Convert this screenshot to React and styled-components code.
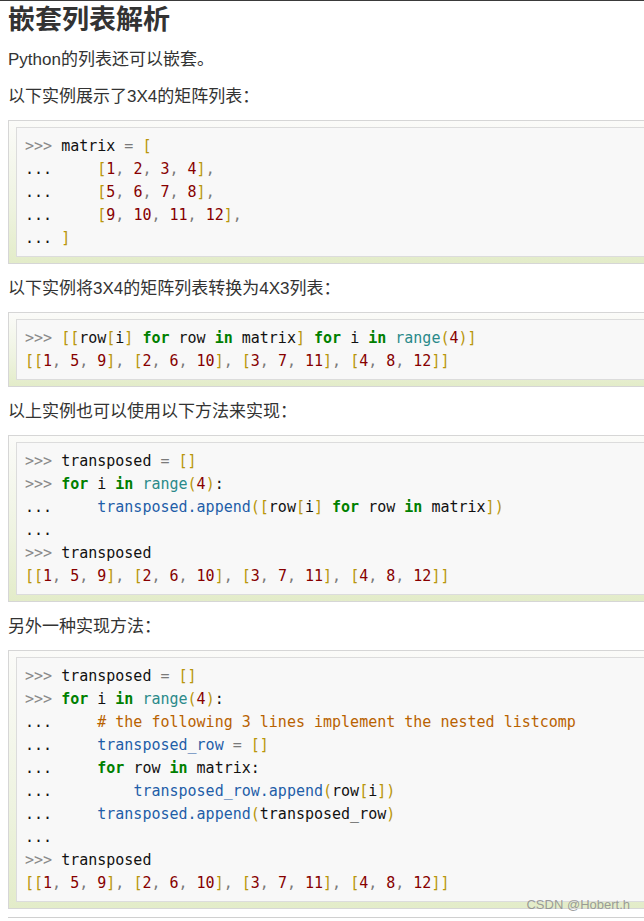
import React from "react";
import styled, { createGlobalStyle } from "styled-components";

const GlobalStyle = createGlobalStyle`
  html, body {
    margin: 0;
    padding: 0;
    background: #fff;
  }
`;

const blocks = [
  [
    ">>> matrix = [",
    "...     [1, 2, 3, 4],",
    "...     [5, 6, 7, 8],",
    "...     [9, 10, 11, 12],",
    "... ]",
  ],
  [
    ">>> [[row[i] for row in matrix] for i in range(4)]",
    "[[1, 5, 9], [2, 6, 10], [3, 7, 11], [4, 8, 12]]",
  ],
  [
    ">>> transposed = []",
    ">>> for i in range(4):",
    "...     transposed.append([row[i] for row in matrix])",
    "...",
    ">>> transposed",
    "[[1, 5, 9], [2, 6, 10], [3, 7, 11], [4, 8, 12]]",
  ],
  [
    ">>> transposed = []",
    ">>> for i in range(4):",
    "...     # the following 3 lines implement the nested listcomp",
    "...     transposed_row = []",
    "...     for row in matrix:",
    "...         transposed_row.append(row[i])",
    "...     transposed.append(transposed_row)",
    "...",
    ">>> transposed",
    "[[1, 5, 9], [2, 6, 10], [3, 7, 11], [4, 8, 12]]",
  ],
];

const KEYWORDS = ["for", "in"];
const BUILTINS = ["range"];

// tiny python-ish tokenizer, just enough for these lines
function tokenize(line) {
  const out = [];
  let rest = line;
  let continuation = false;
  if (rest.startsWith(">>>")) {
    out.push(["prompt", ">>>"]);
    rest = rest.slice(3);
  } else if (rest.startsWith("...")) {
    out.push(["dots", "..."]);
    rest = rest.slice(3);
    continuation = true;
  }
  const re = /(\s+)|(#.*$)|([A-Za-z_]\w*(?:\.[A-Za-z_]\w*)*)|(\d+)|([\[\]\(\)])|([,=])|(.)/g;
  let m;
  let first = true;
  while ((m = re.exec(rest))) {
    const [text, ws, comment, ident, num, br, op] = m;
    if (ws) {
      out.push(["plain", text]);
      continue;
    }
    if (comment) out.push(["comment", text]);
    else if (ident) {
      if (KEYWORDS.includes(ident)) out.push(["keyword", text]);
      else if (BUILTINS.includes(ident)) out.push(["builtin", text]);
      else if (continuation && first) out.push(["name", text]);
      else out.push(["plain", text]);
    } else if (num) out.push(["number", text]);
    else if (br) out.push(["bracket", text]);
    else if (op) out.push(["op", text]);
    else out.push(["plain", text]);
    first = false;
  }
  return out;
}

const App = () => (
  <>
    <GlobalStyle />
    <Page>
      <Heading>嵌套列表解析</Heading>
      <Text>Python的列表还可以嵌套。</Text>
      <Text>以下实例展示了3X4的矩阵列表：</Text>
      <CodeExample lines={blocks[0]} />
      <Text>以下实例将3X4的矩阵列表转换为4X3列表：</Text>
      <CodeExample lines={blocks[1]} />
      <Text>以上实例也可以使用以下方法来实现：</Text>
      <CodeExample lines={blocks[2]} />
      <Text>另外一种实现方法：</Text>
      <CodeExample lines={blocks[3]} />
      <NextBlock />
      <Watermark>CSDN @Hobert.h</Watermark>
    </Page>
  </>
);

const CodeExample = ({ lines }) => (
  <Example>
    <Pre>
      {lines.map((line, i) => (
        <Line key={i}>
          {tokenize(line).map(([kind, text], j) => (
            <Tok key={j} $kind={kind}>
              {text}
            </Tok>
          ))}
        </Line>
      ))}
    </Pre>
  </Example>
);

const colors = {
  prompt: "#8a8a8a",
  dots: "#111",
  keyword: "#008000",
  builtin: "#2a8a8a",
  name: "#1f5ea8",
  number: "#870000",
  bracket: "#b8960b",
  op: "#7a7a7a",
  comment: "#b86200",
  plain: "#111",
};

const Page = styled.div`
  position: relative;
  border-top: 1px solid #3a3a3a;
  padding-left: 8px;
  overflow: hidden;
  min-height: 920px;
  font-family: "Liberation Sans", "Noto Sans CJK SC", sans-serif;
  color: #333;
`;

const Heading = styled.h2`
  margin: 0 0 11px;
  font-family: "Noto Sans CJK SC", sans-serif;
  font-size: 27px;
  line-height: 34px;
  font-weight: 700;
  color: #333;
`;

const Text = styled.p`
  margin: 0 0 9px;
  font-size: 17px;
  line-height: 28px;
  color: #333;
`;

const Example = styled.div`
  margin: 0 -40px 11px 0;
  padding: 6px 0 6px 7px;
  border: 1px solid #d6d6d6;
  background: linear-gradient(to bottom, #fbfbf9 0%, #eef3e0 60%, #e3ecc9 100%);
`;

const Pre = styled.div`
  padding: 7px 8px 6px;
  border: 1px solid #dcdcdc;
  background: #f8f8f8;
  font-family: "DejaVu Sans Mono", "Liberation Mono", monospace;
  font-size: 15px;
  line-height: 23px;
  white-space: pre;
`;

const Line = styled.div`
  height: 23px;
`;

const Tok = styled.span`
  color: ${(p) => colors[p.$kind]};
  font-weight: ${(p) => (p.$kind === "keyword" ? 700 : 400)};
`;

const NextBlock = styled.div`
  margin-top: -3px;
  height: 10px;
  border-top: 1px solid #d0d0d0;
  margin-right: -40px;
`;

const Watermark = styled.div`
  position: absolute;
  right: 14px;
  top: 896px;
  font-size: 13px;
  color: rgba(140, 140, 140, 0.85);
  font-family: "Liberation Sans", sans-serif;
`;

export default App;
